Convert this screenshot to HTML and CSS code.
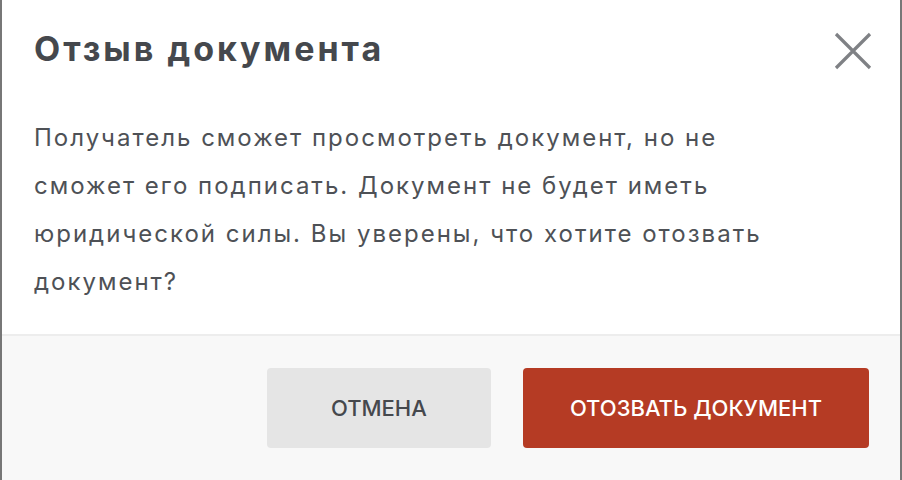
FILE: index.html
```html
<!DOCTYPE html>
<html lang="ru">
  <head>
    <meta charset="utf-8" />
    <link rel="stylesheet" href="styles.css">
    <title>Отзыв документа</title>
  </head>
  <body>
    <div class="dialog">
      <div class="dialog-header">
        <h2 class="dialog-title">Отзыв документа</h2>
        <button class="close-button" aria-label="Закрыть">
          <svg width="38" height="38" viewBox="0 0 38 38">
            <path d="M2 2 L36 36 M36 2 L2 36" stroke="#7f8185" stroke-width="3.2" fill="none" />
          </svg>
        </button>
      </div>

      <div class="dialog-body">
        <p class="dialog-text">
          Получатель сможет просмотреть документ, но не сможет его подписать.
          Документ не будет иметь юридической силы. Вы уверены, что хотите
          отозвать документ?
        </p>
      </div>

      <div class="dialog-footer">
        <button class="btn btn-cancel">Отмена</button>
        <button class="btn btn-danger">Отозвать документ</button>
      </div>
    </div>
  </body>
</html>
```

FILE: styles.css
```css
body {
  margin: 0;
  font-family: Inter, "Noto Sans", sans-serif;
  background-color: #fff;
}

.dialog {
  height: 480px;
  box-sizing: border-box;
  border-left: 2px solid #777;
  border-right: 2px solid #777;
  display: flex;
  flex-direction: column;
}

.dialog-header {
  display: flex;
  justify-content: space-between;
  align-items: flex-start;
  padding: 29px 28px 0 32px;
}

.dialog-title {
  margin: 0;
  font-size: 34px;
  line-height: 40px;
  font-weight: 700;
  letter-spacing: 3px;
  color: #45484d;
}

.close-button {
  border: none;
  background: none;
  padding: 0;
  margin-top: 3px;
  width: 38px;
  height: 38px;
  cursor: pointer;
}

.close-button svg {
  display: block;
}

.dialog-body {
  padding: 44px 32px 28px 32px;
}

.dialog-text {
  margin: 0;
  max-width: 760px;
  font-size: 24px;
  line-height: 48px;
  letter-spacing: 2px;
  color: #4e5156;
}

.dialog-footer {
  flex: 1;
  display: flex;
  justify-content: flex-end;
  align-items: flex-start;
  gap: 32px;
  padding: 32px 31px 32px 32px;
  background-color: #f8f8f8;
  border-top: 2px solid #ededed;
}

.btn {
  height: 80px;
  min-width: 224px;
  padding: 0 47px;
  border: none;
  border-radius: 4px;
  font-family: Inter, "Noto Sans", sans-serif;
  font-size: 22px;
  font-weight: 500;
  text-transform: uppercase;
  cursor: pointer;
}

.btn-cancel {
  background-color: #e5e5e5;
  color: #45484d;
}

.btn-danger {
  background-color: #b53b24;
  color: #fff;
}
```
